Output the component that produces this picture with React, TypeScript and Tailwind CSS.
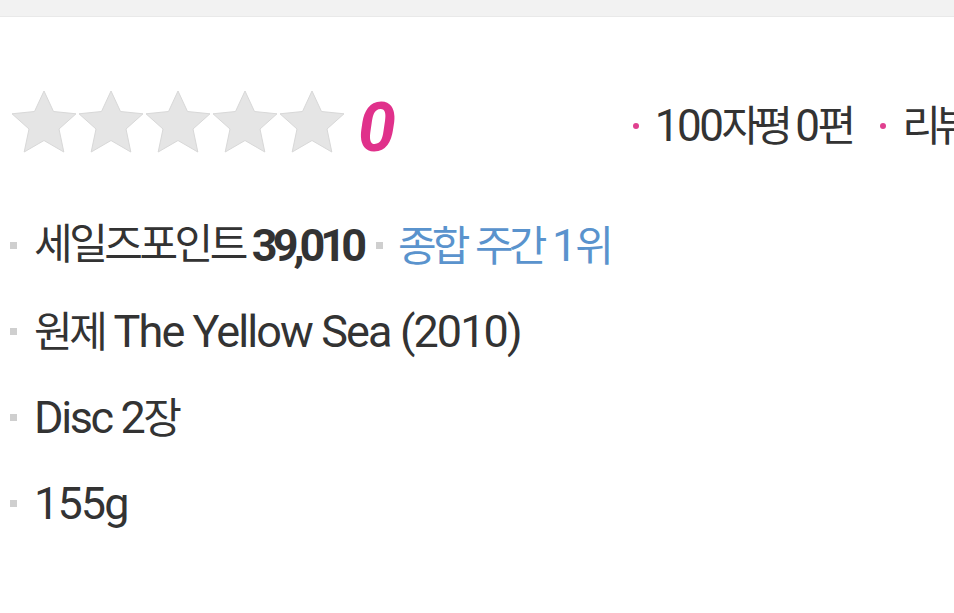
import type { ReactNode } from 'react'

function Star() {
  return (
    <svg width="66" height="63" viewBox="0 0 66 63" className="shrink-0">
      <polygon
        points="33,1 42.5,21.5 65,23.8 48,39 52.8,62 33,50.5 13.2,62 18,39 1,23.8 23.5,21.5"
        fill="#e5e5e5"
        stroke="#d8d8d8"
        strokeWidth="1"
        strokeLinejoin="round"
      />
    </svg>
  )
}

// Korean syllables sit tighter than the latin text
function K({ children, className = 'tracking-[-3.5px]' }: { children: ReactNode; className?: string }) {
  return <span className={'text-[42px] ' + className}>{children}</span>
}

function Row({ children }: { children: ReactNode }) {
  return (
    <div className="flex items-center h-[86px]">
      <span className="w-[7px] h-[7px] bg-[#cfcfcf] mr-[17px] shrink-0" />
      <div>{children}</div>
    </div>
  )
}

export default function App() {
  const font = { fontFamily: 'Roboto, "Noto Sans CJK KR", sans-serif' }
  return (
    <div className="w-[954px] h-[613px] bg-white overflow-hidden" style={font}>
      <div className="h-[17px] bg-[#f2f2f2] border-b border-[#e9e9e9]" />

      <div className="flex items-center h-[63px] mt-[73px] pl-[11px] whitespace-nowrap">
        <div className="flex gap-[1px]">
          <Star />
          <Star />
          <Star />
          <Star />
          <Star />
        </div>
        <span className="ml-[13px] mt-[12px] text-[68px] leading-none font-bold italic text-[#e0318b]">0</span>
        <div className="ml-[237px] mt-[8px] flex items-center text-[44px] leading-none text-[#333] tracking-[-2.5px]">
          <span className="w-[6px] h-[6px] rounded-full bg-[#e0408f] mr-[16px]" />
          <span>
            100<K className="tracking-[-6px]">자평</K> 0<K className="tracking-[-6px]">편</K>
          </span>
          <span className="w-[6px] h-[6px] rounded-full bg-[#e0408f] ml-[30px] mr-[16px]" />
          <span>
            <K className="tracking-[-6px]">리뷰</K> 0<K className="tracking-[-6px]">편</K>
          </span>
        </div>
      </div>

      <div className="pl-[10px] pt-[49px] text-[45px] leading-none text-[#333] tracking-[-1.9px] whitespace-nowrap">
        <Row>
          <div className="flex items-center">
            <K>세일즈포인트</K>
            <span className="font-bold ml-[7px] tracking-[-5px]">39,010</span>
            <span className="w-[7px] h-[7px] bg-[#cfcfcf] ml-[14px] mr-[15px]" />
            <span className="text-[#5a93cd]">
              <K className="tracking-[-4.8px]">종합</K> <K className="tracking-[-4.8px]">주간</K> 1
              <K className="tracking-[-4.8px]">위</K>
            </span>
          </div>
        </Row>
        <Row>
          <K>원제</K> The Yellow Sea (2010)
        </Row>
        <Row>
          <span className="tracking-[-2.4px]">Disc 2</span>
          <K>장</K>
        </Row>
        <Row>155g</Row>
      </div>
    </div>
  )
}
